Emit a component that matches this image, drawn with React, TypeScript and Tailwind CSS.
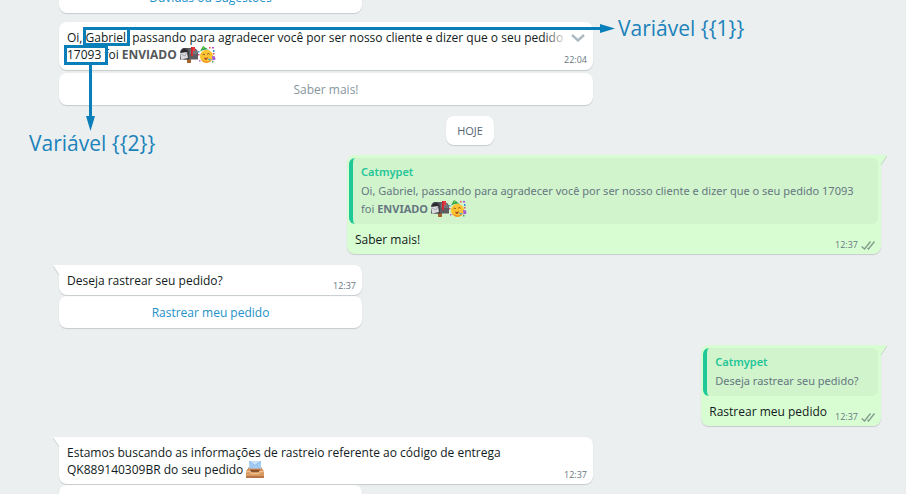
import type { ReactNode } from 'react';

function MailboxEmoji() {
  return (
    <svg viewBox="0 0 18 17" className="inline-block h-[17px] w-[18px] align-[-4px]" role="img" aria-label="caixa de correio">
      <rect x="7" y="11" width="4" height="6" fill="#a4652f" />
      <rect x="7" y="11" width="4" height="2" fill="#6d3f1c" />
      <path d="M3 2h10a5 5 0 0 1 5 5v6.500H4z" fill="#5d5c62" />
      <path d="M10 3h3a4 4 0 0 1 4 4v1H10z" fill="#77767d" />
      <path d="M0 7a4.500 5 0 0 1 9 0v6.500H0z" fill="#424047" />
      <path d="M1 8a3 4 0 0 1 7 0v4H1z" fill="#2a292d" />
      <path d="M0 7l7-1 1 6-7 1.500z" fill="#dadce0" />
      <path d="M1 8l4 2 2-4" fill="none" stroke="#98999f" strokeWidth=".8" />
      <path d="M11 1h4v4h-2v5h-2z" fill="#e83a3f" />
      <path d="M11 1h1.500v9H11z" fill="#c9252f" />
    </svg>
  );
}

function PartyEmoji() {
  return (
    <svg viewBox="0 0 18 17" className="inline-block h-[17px] w-[18px] align-[-4px]" role="img" aria-label="festa">
      <circle cx="8.5" cy="10.3" r="6.6" fill="#fdc534" />
      <path d="M3 13a6.300 6.300 0 0 0 11 1c-3 2-8 2-11-1z" fill="#ee9424" />
      <path d="M2 5.500L5 0l6 4c-3-1-6 0-9 1.500z" fill="#259c4b" />
      <path d="M5 0l2 1.300L4.500 4z" fill="#75ce4f" />
      <path d="M4.500 8.800q1.200-1.300 2.300 0M9.200 8.200q1.200-1.300 2.300 0" fill="none" stroke="#6b421f" strokeWidth=".9" />
      <path d="M6 11.500q2.500 1 4-.5-.5 3-2 3t-2-2.500z" fill="#a64a21" />
      <path d="M10 12.500l4 1-3 1.300z" fill="#4aa6de" />
      <path d="M14 10l3 .5.5 3-3 1z" fill="#a459d1" />
      <rect x="0" y="5" width="1.500" height="1.500" fill="#4a9fe0" />
      <rect x="0" y="8" width="1.500" height="1.500" fill="#df4a7c" />
      <rect x="14" y="1" width="2" height="1.500" fill="#b14fd0" />
      <rect x="11" y="1" width="1.500" height="1.500" fill="#ea445b" />
      <rect x="15" y="4" width="1.500" height="2" fill="#3f94d8" />
      <rect x="15" y="7" width="1.500" height="1.500" fill="#df4a6c" />
      <rect x="1" y="14" width="1.500" height="1.500" fill="#b965cf" />
      <rect x="14" y="15" width="1.500" height="1.500" fill="#44a960" />
    </svg>
  );
}

function InboxEmoji() {
  return (
    <svg viewBox="0 0 18 17" className="inline-block h-[17px] w-[18px] align-[-4px]" role="img" aria-label="caixa de entrada">
      <path d="M3 6h12l3 5H0z" fill="#a8683c" />
      <rect x="3" y="0" width="12" height="9" fill="#a3cdf2" />
      <path d="M3 0h12L9 4.500z" fill="#c5e2fa" />
      <path d="M3 0l6 4.500L15 0" fill="none" stroke="#7fb0dc" strokeWidth=".7" />
      <path d="M3 8.500l4-4M15 8.500l-4-4" stroke="#8abbe4" strokeWidth=".7" />
      <path d="M0 10L2.500 7.500h13L18 10v6a1 1 0 0 1-1 1H1a1 1 0 0 1-1-1z" fill="#d99a62" />
      <path d="M4 8.500h10L13 11H5z" fill="#8f5530" />
      <path d="M0 10h4.500l1 2h7l1-2H18v1.200h-4l-1 2H5l-1-2H0z" fill="#efc192" />
      <path d="M0 15h18v1a1 1 0 0 1-1 1H1a1 1 0 0 1-1-1z" fill="#b87544" />
    </svg>
  );
}

function Ticks() {
  return (
    <svg viewBox="0 0 14 9" className="h-[9px] w-[14px]" fill="none" stroke="#829c8a" strokeWidth="1.4" aria-label="entregue">
      <path d="M.7 5.500L3.500 8l6-7.500M6.500 7l1 1 6-7.500" />
    </svg>
  );
}

function Time({ value, sent = false }: { value: string; sent?: boolean }) {
  return (
    <span className="-mb-1 flex shrink-0 items-center gap-[3px] self-end text-[9px] leading-[14px] text-[#667781]">
      <time>{value}</time>
      {sent && <Ticks />}
    </span>
  );
}

function Incoming({ children, time, tail = false, menu = false }: { children: ReactNode; time: string; tail?: boolean; menu?: boolean }) {
  return (
    <div
      className={`relative flex justify-between rounded-lg bg-white pt-[7px] pr-1.5 pl-2 shadow-[0_1px_1px_rgba(11,20,26,0.16)] ${tail ? 'rounded-tl-none pb-1.5' : 'pb-[7px]'}`}
    >
      {tail && (
        <svg viewBox="0 0 7 11" className="absolute top-0 -left-[6px] h-[11px] w-[7px]" aria-hidden="true">
          <path d="M0 0h7v11z" fill="#fff" />
          <path d="M0 1l6 9" stroke="#ccd2d3" strokeWidth="1" />
        </svg>
      )}
      <p className="whitespace-nowrap text-[#111b21]">{children}</p>
      {menu && (
        <button
          type="button"
          aria-label="Abrir menu"
          className="absolute top-[7px] right-0 flex h-[17px] w-[50px] items-center justify-end bg-linear-to-r from-transparent to-white to-50% pr-2"
        >
          <svg viewBox="0 0 14 8" className="h-2 w-[14px]" fill="none" stroke="#aebac1" strokeWidth="2.400">
            <path d="M1 1l6 5.500L13 1" />
          </svg>
        </button>
      )}
      <Time value={time} />
    </div>
  );
}

function Reply({ children, muted = false, label }: { children?: ReactNode; muted?: boolean; label?: string }) {
  return (
    <button
      type="button"
      aria-label={label}
      className={`h-8 w-full rounded-lg bg-white shadow-[0_1px_1px_rgba(11,20,26,0.16)] ${muted ? 'text-[#8696a0]' : 'text-[#2391c9]'}`}
    >
      {children}
    </button>
  );
}

function Outgoing({ quote, text, wide = false }: { quote: ReactNode; text: string; wide?: boolean }) {
  return (
    <div
      className={`relative self-end rounded-lg rounded-tr-none bg-[#d9fdd3] pt-[3px] pr-[3px] pl-0.5 shadow-[0_1px_1px_rgba(11,20,26,0.16)] ${wide ? 'w-[534px]' : ''}`}
    >
      <svg viewBox="0 0 7 11" className="absolute top-0 -right-[6px] h-[11px] w-[7px]" aria-hidden="true">
        <path d="M0 0h7L0 11z" fill="#d9fdd3" />
        <path d="M7 1L1 10" stroke="#c3d6c4" strokeWidth="1" />
      </svg>
      <blockquote className="rounded-md border-l-4 border-[#1ec997] bg-[#d1f4cc] pt-[5px] pr-[18px] pb-1.5 pl-2 font-['Noto_Sans','Open_Sans',sans-serif] text-[11px] leading-[18px] text-[#667781]">
        <cite className="block pb-px font-semibold text-[#23c598] not-italic">Catmypet</cite>
        <p className="whitespace-nowrap">{quote}</p>
      </blockquote>
      <div className="flex justify-between gap-2 pt-[7px] pr-[3px] pb-1.5 pl-1.5 text-[#111b21]">
        <p>{text}</p>
        <Time value="12:37" sent />
      </div>
    </div>
  );
}

function Annotations() {
  return (
    <>
      <svg className="pointer-events-none absolute top-0 left-0 h-[140px] w-[620px]" viewBox="0 0 620 140" fill="none" stroke="#087fb8" strokeWidth="3" aria-hidden="true">
        <path d="M84.500 28.500H128.500V44.500H84.500zM65.500 46.500H106.500V63.500H65.500zM128 28.500H602M90.500 64V118" />
        <path d="M600 24l15 4.500-15 4.500zM86 116h9l-4.500 15z" fill="#087fb8" stroke="none" />
      </svg>
      <span className="absolute top-4 left-[618px] font-['Open_Sans'] text-[21px] leading-6 whitespace-nowrap text-[#1b82ba]">{'Variável {{1}}'}</span>
      <span className="absolute top-[131px] left-[29px] font-['Open_Sans'] text-[21px] leading-6 whitespace-nowrap text-[#1b82ba]">{'Variável {{2}}'}</span>
    </>
  );
}

export default function App() {
  return (
    <main className="relative h-screen overflow-hidden bg-[#ebeff0] font-['Open_Sans','Noto_Sans',sans-serif] text-[12px] leading-[17px]">
      <div className="-mt-[19px] flex flex-col pr-[25px] pl-[59px]">
        <div className="w-[303px]">
          <Reply>Dúvidas ou Sugestões</Reply>
        </div>

        <div className="mt-[9px] flex w-[534px] flex-col gap-[3px]">
          <Incoming time="22:04" menu>
            Oi, Gabriel, passando para agradecer você por ser nosso cliente e dizer que o seu pedido
            <br />
            17093 foi <strong className="font-bold text-[#54585c]">ENVIADO</strong> <MailboxEmoji />
            <PartyEmoji />
          </Incoming>
          <Reply muted>Saber mais!</Reply>
        </div>

        <div className="mt-[11px] self-center rounded-lg bg-white px-[11px] py-1.5 text-[11px] text-[#54656f] shadow-[0_1px_1px_rgba(11,20,26,0.16)]">
          HOJE
        </div>

        <div className="mt-2.5 flex flex-col">
          <Outgoing
            wide
            quote={
              <>
                Oi, Gabriel, passando para agradecer você por ser nosso cliente e dizer que o seu pedido 17093
                <br />
                foi <strong className="font-bold">ENVIADO</strong> <MailboxEmoji />
                <PartyEmoji />
              </>
            }
            text="Saber mais!"
          />
        </div>

        <div className="mt-[11px] flex w-[303px] flex-col gap-px">
          <Incoming time="12:37" tail>
            Deseja rastrear seu pedido?
          </Incoming>
          <Reply>Rastrear meu pedido</Reply>
        </div>

        <div className="mt-[17px] flex flex-col">
          <Outgoing quote="Deseja rastrear seu pedido?" text="Rastrear meu pedido" />
        </div>

        <div className="mt-[11px] flex w-[534px] flex-col gap-px">
          <Incoming time="12:37" tail>
            Estamos buscando as informações de rastreio referente ao código de entrega
            <br />
            QK889140309BR do seu pedido <InboxEmoji />
          </Incoming>
          <div className="w-[303px]">
            <Reply label="Rastrear pedido" />
          </div>
        </div>
      </div>
      <Annotations />
    </main>
  );
}
